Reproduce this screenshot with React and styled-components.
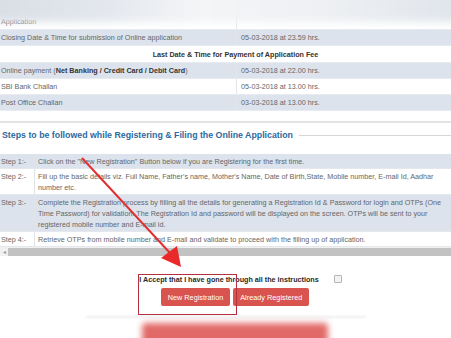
import styled, { createGlobalStyle } from "styled-components";

const GlobalStyle = createGlobalStyle`
  html, body { margin: 0; padding: 0; background: #fff; }
  body { font-family: "Liberation Sans", Arial, sans-serif; }
`;

const dates = [
  { label: "Closing Date & Time for submission of Online application", value: "05-03-2018 at 23.59 hrs.", shade: true },
];

const payments = [
  { label: <>Online payment (<b>Net Banking / Credit Card / Debit Card</b> )</>, value: "05-03-2018 at 22.00 hrs.", shade: true },
  { label: "SBI Bank Challan", value: "05-03-2018 at 13.00 hrs.", shade: false },
  { label: "Post Office Challan", value: "03-03-2018 at 13.00 hrs.", shade: true },
];

const steps = [
  { no: "Step 1:-", text: "Click on the \"New Registration\" Button below if you are Registering for the first time.", shade: true },
  { no: "Step 2:-", text: "Fill up the basic details viz. Full Name, Father's name, Mother's Name, Date of Birth,State, Mobile number, E-mail Id, Aadhar number etc.", shade: false },
  { no: "Step 3:-", text: "Complete the Registration process by filling all the details for generating a Registration Id & Password for login and OTPs (One Time Password) for validation. The Registration Id and password will be displayed on the screen. OTPs will be sent to your registered mobile number and E-mail id.", shade: true },
  { no: "Step 4:-", text: "Retrieve OTPs from mobile number and E-mail and validate to proceed with the filling up of application.", shade: false },
];

const App = () => (
  <>
    <GlobalStyle />
    <Page>
      <TopBlur />
      <DateTable>
        <DateRow $shade={false}>
          <Cell>Application</Cell>
          <Cell $right />
        </DateRow>
        {dates.map((d) => (
          <DateRow key={d.value} $shade={d.shade}>
            <Cell>{d.label}</Cell>
            <Cell $right>{d.value}</Cell>
          </DateRow>
        ))}
        <HeadRow>Last Date &amp; Time for Payment of Application Fee</HeadRow>
        {payments.map((d) => (
          <DateRow key={d.value + d.shade} $shade={d.shade}>
            <Cell>{d.label}</Cell>
            <Cell $right>{d.value}</Cell>
          </DateRow>
        ))}
      </DateTable>

      <Rule />

      <Legend>
        <span>Steps to be followed while Registering &amp; Filing the Online Application</span>
        <LegendLine />
      </Legend>

      <StepTable>
        {steps.map((s) => (
          <StepRow key={s.no} $shade={s.shade}>
            <StepNo>{s.no}</StepNo>
            <StepText>{s.text}</StepText>
          </StepRow>
        ))}
      </StepTable>

      <ScrollBar>
        <ScrollArrow>◂</ScrollArrow>
        <ScrollThumb />
      </ScrollBar>

      <Accept>
        <AcceptLabel>I Accept that I have gone through all the instructions</AcceptLabel>
        <CheckBox />
      </Accept>

      <Buttons>
        <RedButton>New Registration</RedButton>
        <RedButton>Already Registered</RedButton>
      </Buttons>

      <Shadow />
      <BlurButton />

      <Overlay width="451" height="338" viewBox="0 0 451 338">
        <rect x="138.5" y="274.5" width="98" height="40" fill="none" stroke="#b4303c" strokeWidth="1" />
        <line x1="82" y1="158" x2="170" y2="253" stroke="#e03131" strokeWidth="2" />
        <polygon points="161,258 177,246 181,267" fill="#ea2a2a" />
      </Overlay>
    </Page>
  </>
);

const Page = styled.div`
  position: relative;
  width: 451px;
  height: 338px;
  overflow: hidden;
  background: #fff;
  color: #666;
  font-size: 7.2px;
`;

const TopBlur = styled.div`
  position: absolute;
  left: -20px;
  right: -20px;
  top: -10px;
  height: 32px;
  background: linear-gradient(90deg, #d8dde5 0%, #e3e7ed 25%, #f4f5f7 45%, #eef0f3 70%, #dfe4ea 100%);
  filter: blur(4px);
  z-index: 2;
`;

const DateTable = styled.div`
  display: flex;
  flex-direction: column;
  padding-top: 14px;
`;

const DateRow = styled.div`
  display: grid;
  grid-template-columns: 236px 1fr;
  height: 15px;
  background: ${({ $shade }) => ($shade ? "#dce3ed" : "#fff")};
  border-bottom: 1px solid #e8ebf0;
`;

const Cell = styled.div`
  display: flex;
  align-items: center;
  padding-left: ${({ $right }) => ($right ? "4px" : "1px")};
  border-left: ${({ $right }) => ($right ? "1px solid #e2e5ea" : "none")};
  white-space: nowrap;
  b { color: #333; }
`;

const HeadRow = styled.div`
  height: 16px;
  display: flex;
  align-items: center;
  justify-content: center;
  padding-left: 20px;
  font-weight: bold;
  color: #333;
  border-bottom: 1px solid #e8ebf0;
`;

const Rule = styled.div`
  margin-top: 10px;
  height: 2px;
  background: #e4e4e4;
`;

const Legend = styled.div`
  display: flex;
  align-items: center;
  gap: 6px;
  height: 24px;
  padding-left: 2px;
  font-size: 8.8px;
  font-weight: bold;
  color: #2d6aa0;
  white-space: nowrap;
`;

const LegendLine = styled.div`
  flex: 1;
  height: 1px;
  background: #d6d6d6;
`;

const StepTable = styled.div`
  margin-top: 7px;
  display: flex;
  flex-direction: column;
`;

const StepRow = styled.div`
  display: grid;
  grid-template-columns: 34px 1fr;
  background: ${({ $shade }) => ($shade ? "#dce3ed" : "#fff")};
  border-bottom: 1px solid #e4e7ec;
  line-height: 11px;
  padding: 2px 0 1px;
`;

const StepNo = styled.div`
  padding-left: 1px;
  white-space: nowrap;
`;

const StepText = styled.div`
  padding: 0 8px 0 3px;
  border-left: 1px solid #e0e3e8;
  margin: -2px 0 -1px;
  padding-top: 2px;
  padding-bottom: 1px;
`;

const ScrollBar = styled.div`
  display: flex;
  align-items: center;
  height: 9px;
  background: #f0f0f0;
`;

const ScrollArrow = styled.span`
  width: 8px;
  font-size: 6px;
  color: #999;
  text-align: center;
`;

const ScrollThumb = styled.div`
  flex: 1;
  height: 8px;
  background: #c2c2c2;
`;

const Accept = styled.div`
  display: flex;
  align-items: center;
  justify-content: center;
  gap: 15px;
  margin-top: 17px;
  padding-left: 30px;
  height: 12px;
`;

const AcceptLabel = styled.span`
  font-weight: bold;
  color: #2a2a2a;
`;

const CheckBox = styled.span`
  width: 6px;
  height: 6px;
  border: 1px solid #b5b5b5;
  background: #f3f3f3;
  border-radius: 1px;
`;

const Buttons = styled.div`
  display: flex;
  justify-content: center;
  gap: 3px;
  margin-top: 3px;
  padding-left: 19px;
`;

const RedButton = styled.button`
  height: 18px;
  padding: 0 7px;
  border: none;
  border-radius: 2px;
  background: #d9534f;
  color: #fff;
  font-family: "Liberation Sans", Arial, sans-serif;
  font-size: 7.3px;
`;

const Shadow = styled.div`
  margin: 10px auto 0;
  width: 280px;
  height: 2px;
  background: #eee;
  filter: blur(1px);
`;

const BlurButton = styled.div`
  margin: 5px 0 0 142px;
  width: 186px;
  height: 30px;
  border-radius: 4px;
  background: #e16a68;
  filter: blur(3px);
`;

const Overlay = styled.svg`
  position: absolute;
  left: 0;
  top: 0;
  pointer-events: none;
  z-index: 3;
`;

export default App;
